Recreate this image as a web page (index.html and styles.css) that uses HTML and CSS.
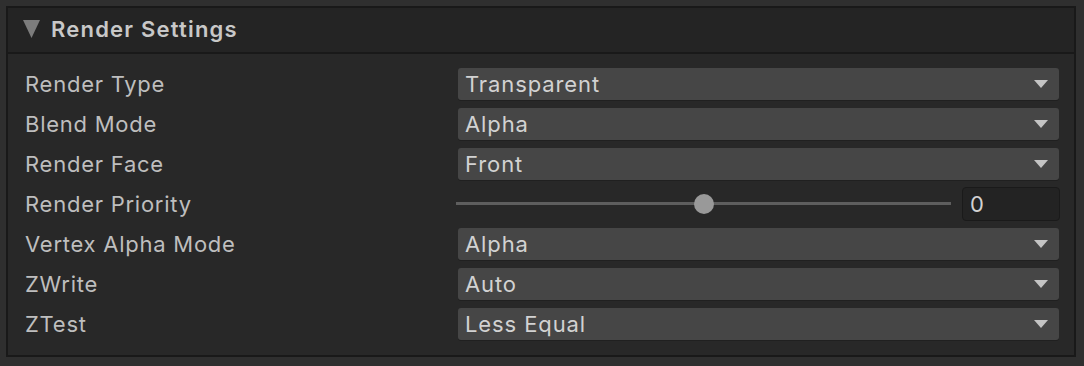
FILE: index.html
```html
<!DOCTYPE html>
<html lang="en">
<head>
  <meta charset="UTF-8" />
  <title>Render Settings</title>
  <link rel="stylesheet" href="styles.css">
</head>
<body>
  <div class="panel">
    <div class="panel-header">
      <svg class="foldout" width="17" height="18" viewBox="0 0 17 18"><polygon points="0,0 17,0 8.5,18" /></svg>
      <span class="title">Render Settings</span>
    </div>

    <div class="panel-body">
      <div class="row">
        <label>Render Type</label>
        <div class="dropdown"><span>Transparent</span><span class="arrow"></span></div>
      </div>
      <div class="row">
        <label>Blend Mode</label>
        <div class="dropdown"><span>Alpha</span><span class="arrow"></span></div>
      </div>
      <div class="row">
        <label>Render Face</label>
        <div class="dropdown"><span>Front</span><span class="arrow"></span></div>
      </div>
      <div class="row">
        <label>Render Priority</label>
        <div class="slider-field">
          <div class="slider">
            <div class="track"></div>
            <div class="thumb" style="left: 50%;"></div>
          </div>
          <div class="number">0</div>
        </div>
      </div>
      <div class="row">
        <label>Vertex Alpha Mode</label>
        <div class="dropdown"><span>Alpha</span><span class="arrow"></span></div>
      </div>
      <div class="row">
        <label>ZWrite</label>
        <div class="dropdown"><span>Auto</span><span class="arrow"></span></div>
      </div>
      <div class="row">
        <label>ZTest</label>
        <div class="dropdown"><span>Less Equal</span><span class="arrow"></span></div>
      </div>
    </div>
  </div>
</body>
</html>
```

FILE: styles.css
```css
body {
  margin: 0;
  padding: 6px 8px 0 6px;
  background-color: #2f2f2f;
  font-family: "Inter", "Noto Sans", sans-serif;
  color: #c4c4c4;
}

.panel {
  border: 2px solid #191919;
  background: #282828;
}

.panel-header {
  display: flex;
  align-items: center;
  height: 46px;
  padding-left: 15px;
  padding-bottom: 3px;
  background: #242424;
  border-bottom: 2px solid #191919;
  box-sizing: border-box;
}

.foldout {
  fill: #7c7c7c;
  margin-right: 11px;
}

.title {
  font-size: 22px;
  font-weight: 600;
  letter-spacing: 1.2px;
  color: #c8c8c8;
}

.panel-body {
  padding: 10px 15px 11px 17px;
}

.row {
  display: flex;
  align-items: center;
  height: 40px;
}

.row label {
  width: 433px;
  font-size: 22px;
  letter-spacing: 0.75px;
  color: #bebebe;
}

.dropdown {
  flex: 1;
  display: flex;
  align-items: center;
  justify-content: space-between;
  height: 32px;
  padding: 0 11px 0 7px;
  background: #464646;
  border-radius: 3px;
  box-shadow: 0 1px 0 #202020;
  box-sizing: border-box;
  font-size: 22px;
  letter-spacing: 0.9px;
  color: #d2d2d2;
}

.arrow {
  width: 0;
  height: 0;
  border-left: 7px solid transparent;
  border-right: 7px solid transparent;
  border-top: 8px solid #c4c4c4;
}

.slider-field {
  flex: 1;
  display: flex;
  align-items: center;
  margin-left: -2px;
  margin-right: -1px;
}

.slider {
  position: relative;
  flex: 1;
  height: 20px;
  margin-right: 11px;
}

.track {
  position: absolute;
  left: 0;
  right: 0;
  top: 8px;
  height: 3px;
  background: #5e5e5e;
}

.thumb {
  position: absolute;
  top: 0;
  width: 20px;
  height: 20px;
  margin-left: -10px;
  border-radius: 50%;
  background: #999999;
}

.number {
  width: 98px;
  height: 34px;
  padding-left: 7px;
  line-height: 32px;
  background: #232323;
  border: 1px solid #1a1a1a;
  border-radius: 4px;
  box-sizing: border-box;
  font-size: 22px;
  color: #d2d2d2;
}
```
